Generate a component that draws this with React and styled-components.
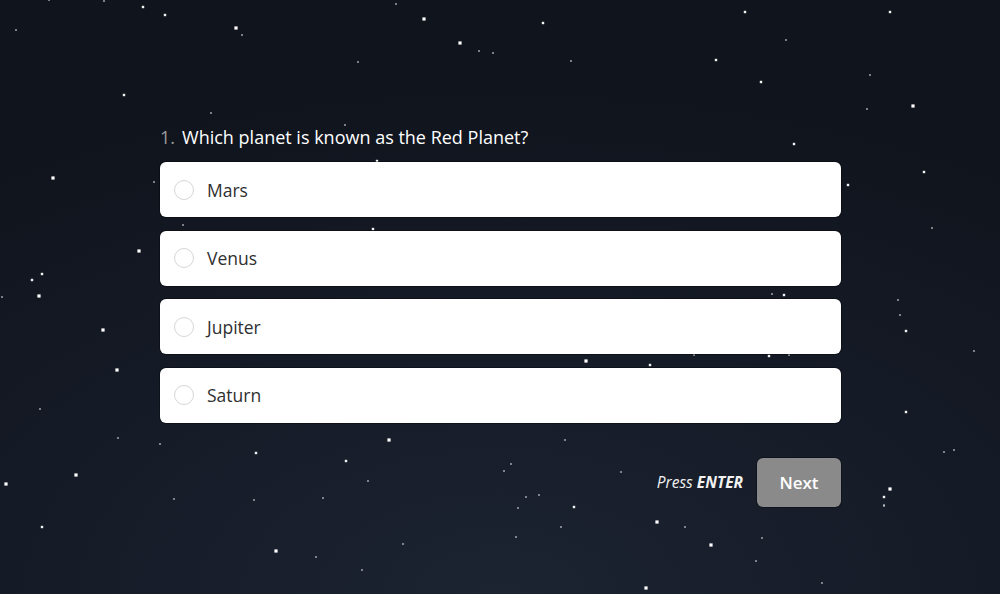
import React from "react";
import styled, { createGlobalStyle } from "styled-components";

const GlobalStyle = createGlobalStyle`
  html, body {
    margin: 0;
    padding: 0;
    background: #10141d;
  }
  * {
    box-sizing: border-box;
  }
`;

// [x, y, size] – b: bright big, m: medium, s: faint small
const STARS = [
  [49, 0, "s"], [104, 1, "s"], [143, 7, "m"], [165, 15, "m"], [236, 28, "b"],
  [242, 35, "s"], [396, 4, "s"], [424, 19, "b"], [460, 43, "b"], [479, 51, "s"],
  [493, 53, "s"], [16, 30, "s"], [124, 95, "m"], [211, 113, "s"], [358, 62, "s"],
  [345, 125, "s"], [543, 23, "m"], [745, 12, "m"], [890, 12, "m"], [786, 40, "s"],
  [571, 61, "s"], [716, 60, "m"], [761, 82, "m"], [870, 75, "s"], [867, 109, "s"],
  [913, 106, "b"], [794, 144, "m"], [924, 172, "m"], [848, 185, "m"], [53, 178, "b"],
  [154, 182, "s"], [139, 251, "b"], [42, 274, "m"], [32, 280, "m"], [39, 296, "b"],
  [2, 297, "s"], [103, 330, "b"], [117, 370, "b"], [40, 409, "s"], [118, 438, "s"],
  [160, 444, "s"], [76, 475, "b"], [6, 484, "b"], [42, 527, "m"], [932, 228, "s"],
  [898, 300, "s"], [900, 315, "s"], [906, 331, "m"], [974, 351, "s"], [906, 412, "m"],
  [944, 452, "s"], [954, 450, "s"], [890, 489, "b"], [884, 497, "m"], [884, 506, "s"],
  [256, 453, "m"], [389, 440, "b"], [565, 440, "s"], [346, 461, "m"], [368, 481, "s"],
  [511, 464, "s"], [504, 471, "s"], [621, 472, "s"], [174, 499, "s"], [254, 500, "s"],
  [323, 498, "s"], [526, 497, "s"], [539, 495, "s"], [518, 508, "s"], [574, 507, "m"],
  [561, 527, "s"], [516, 537, "s"], [403, 544, "s"], [276, 551, "b"], [316, 557, "s"],
  [362, 570, "s"], [646, 588, "b"], [657, 522, "b"], [685, 527, "s"], [711, 545, "b"],
  [762, 538, "s"], [756, 561, "s"], [822, 583, "s"], [884, 505, "s"], [772, 294, "s"],
  [784, 295, "m"], [586, 361, "b"], [650, 365, "m"], [769, 356, "m"], [694, 355, "s"],
  [789, 355, "s"], [377, 161, "m"], [183, 225, "s"], [373, 229, "m"],
];

const SIZES = {
  b: { d: 3.2, o: 1 },
  m: { d: 2.4, o: 0.95 },
  s: { d: 1.6, o: 0.7 },
};

const Page = styled.div`
  position: relative;
  width: 100%;
  height: 594px;
  overflow: hidden;
  background: radial-gradient(
    ellipse 90% 85% at 50% 100%,
    #1c2431 0%,
    #161c28 45%,
    #10141d 100%
  );
  font-family: "Open Sans", "Noto Sans", sans-serif;
`;

const StarField = styled.svg`
  position: absolute;
  inset: 0;
  width: 100%;
  height: 100%;
  pointer-events: none;
`;

const Quiz = styled.main`
  position: relative;
  width: 681px;
  margin: 0 0 0 160px;
  padding-top: 124px;
  display: flex;
  flex-direction: column;
`;

const Question = styled.h2`
  margin: 0 0 12px;
  font-size: 18px;
  font-weight: 400;
  line-height: 26px;
  color: #ffffff;
`;

const Number = styled.span`
  color: #9c9c9c;
  margin-right: 7px;
`;

const Options = styled.ul`
  list-style: none;
  margin: 0;
  padding: 0;
  display: flex;
  flex-direction: column;
  gap: 13.5px;
`;

const Option = styled.li`
  height: 55px;
  display: flex;
  align-items: center;
  gap: 12px;
  padding: 0 14px;
  background: #ffffff;
  border-radius: 6px;
  box-shadow: 0 0 0 1px rgba(0, 0, 0, 0.35);
  cursor: pointer;
`;

const Radio = styled.span`
  width: 20px;
  height: 20px;
  border-radius: 50%;
  border: 1.5px solid #d6d6d6;
  flex-shrink: 0;
`;

const Label = styled.span`
  font-size: 17.5px;
  color: #2f2f2f;
  padding-left: 1px;
`;

const Footer = styled.div`
  margin-top: 35px;
  display: flex;
  justify-content: flex-end;
  align-items: center;
  gap: 14px;
`;

const Hint = styled.span`
  font-size: 15.5px;
  font-style: italic;
  color: #f2f2f2;

  b {
    font-weight: 700;
  }
`;

const NextButton = styled.button`
  width: 84px;
  height: 49px;
  border: none;
  border-radius: 6px;
  background: #8b8a8a;
  color: #ffffff;
  font-family: inherit;
  font-size: 17px;
  font-weight: 600;
  box-shadow: 0 0 0 1px rgba(0, 0, 0, 0.3);
`;

const options = ["Mars", "Venus", "Jupiter", "Saturn"];

export default function App() {
  return (
    <Page>
      <GlobalStyle />
      <StarField viewBox="0 0 1000 594" preserveAspectRatio="none">
        {STARS.map(([x, y, s], i) => {
          const { d, o } = SIZES[s];
          return (
            <rect
              key={i}
              x={x - d / 2}
              y={y - d / 2}
              width={d}
              height={d}
              fill="#ffffff"
              opacity={o}
            />
          );
        })}
      </StarField>
      <Quiz>
        <Question>
          <Number>1.</Number>Which planet is known as the Red Planet?
        </Question>
        <Options>
          {options.map((o) => (
            <Option key={o}>
              <Radio />
              <Label>{o}</Label>
            </Option>
          ))}
        </Options>
        <Footer>
          <Hint>
            Press <b>ENTER</b>
          </Hint>
          <NextButton>Next</NextButton>
        </Footer>
      </Quiz>
    </Page>
  );
}
